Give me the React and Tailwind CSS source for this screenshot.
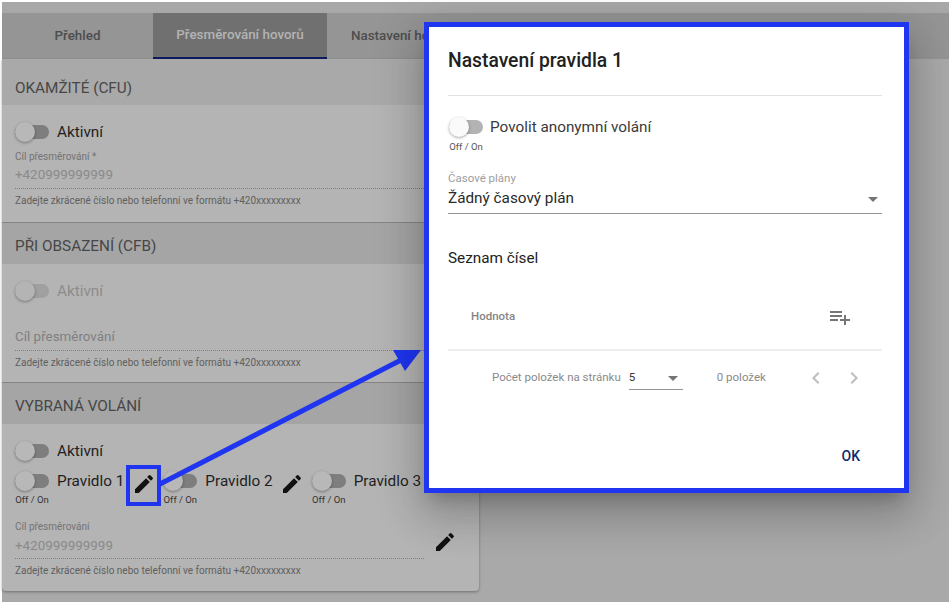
const EDIT = "M3 17.25V21h3.75L17.81 9.94l-3.75-3.75L3 17.25zM20.71 7.04c.39-.39.39-1.02 0-1.41l-2.34-2.34a.9959.9959 0 0 0-1.41 0l-1.83 1.83 3.75 3.75 1.83-1.83z";

function Icon({ d, className }) {
  return (
    <svg viewBox="0 0 24 24" className={className} fill="currentColor" aria-hidden="true">
      <path d={d} />
    </svg>
  );
}

function Pencil({ className = "" }) {
  return <Icon d={EDIT} className={"w-6 h-6 shrink-0 text-[#111111] " + className} />;
}

function Toggle({ track = "bg-[#7e7e7e]", thumb = "bg-[#b8b8b8]" }) {
  return (
    <div className="relative w-[34px] h-[14px] shrink-0">
      <div className={"w-full h-full rounded-full " + track} />
      <div className={"absolute left-0 top-[-3px] w-5 h-5 rounded-full shadow-[0_1px_3px_rgba(0,0,0,0.35)] " + thumb} />
    </div>
  );
}

function Header({ children, className = "" }) {
  return (
    <div className={"flex items-center pl-[13px] text-[15.3px] text-[#474747] bg-[#a5a5a5] " + className}>
      {children}
    </div>
  );
}

function Helper() {
  return (
    <div className="text-[10px] leading-[12px] text-[#5f5f5f] mt-[6px]">
      Zadejte zkrácené číslo nebo telefonní ve formátu +420xxxxxxxxx
    </div>
  );
}

function Dotted() {
  return <div className="mt-[3px] w-[409px] border-b border-dotted border-[#7d7d7d]" />;
}

function Rule({ label }) {
  return (
    <div className="flex flex-col">
      <div className="flex items-center h-[24px]">
        <Toggle />
        <span className="ml-2 text-[15.3px] leading-[24px] text-[#1f1f1f] whitespace-nowrap">{label}</span>
      </div>
      <div className="text-[9.5px] leading-[12px] text-[#333333] mt-[1px] w-[34px] text-center whitespace-nowrap">Off / On</div>
    </div>
  );
}

export default function App() {
  return (
    <div className="relative w-[949px] h-[603px] overflow-hidden bg-white pl-[2px] pt-[2px] pb-[1px] font-['Roboto',sans-serif]">
      <div className="h-full bg-[#a9a9a9]">
        <div className="h-[11px] bg-[#a8a8a8]" />
        <div className="flex h-[46px] bg-[#959595] text-[13.4px] font-medium text-[#4d4d4d]">
          <div className="w-[151px] flex items-center justify-center">Přehled</div>
          <div className="w-[174px] flex items-center justify-center bg-[#707070] text-[#b4b4b4] border-b-2 border-[#0a1a5c]">Přesměrování hovorů</div>
          <div className="w-[174px] flex items-center pl-[24px]">Nastavení hovorů</div>
        </div>

        <div className="w-[477px] rounded-b-[4px] shadow-[0_1px_3px_rgba(0,0,0,0.35)] bg-[#b4b4b4]">
          <Header className="h-[46px] pt-[12px] bg-[#a9a9a9]">OKAMŽITÉ (CFU)</Header>
          <div className="h-[118px] pl-[13px] pt-[15px] border-b border-[#858585]">
            <div className="flex items-center h-[24px]">
              <Toggle />
              <span className="ml-2 text-[15.3px] leading-[24px] text-[#1f1f1f]">Aktivní</span>
            </div>
            <div className="text-[10px] leading-[12px] text-[#737373] mt-[7px]">Cíl přesměrování *</div>
            <div className="text-[13.4px] leading-[20px] text-[#8a8a8a] mt-[2px]">+420999999999</div>
            <Dotted />
            <Helper />
          </div>

          <Header className="h-[41px] pt-[6px]">PŘI OBSAZENÍ (CFB)</Header>
          <div className="h-[119px] pl-[13px] pt-[15px] border-b border-[#858585]">
            <div className="flex items-center h-[24px]">
              <Toggle track="bg-[#a0a0a0]" thumb="bg-[#b4b4b4]" />
              <span className="ml-2 text-[15.3px] leading-[24px] text-[#8c8c8c]">Aktivní</span>
            </div>
            <div className="text-[13.4px] leading-[20px] text-[#808080] mt-[24px]">Cíl přesměrování</div>
            <Dotted />
            <Helper />
          </div>

          <Header className="h-[41px] pt-[6px]">VYBRANÁ VOLÁNÍ</Header>
          <div className="h-[167px] pl-[13px] pt-[15px]">
            <div className="flex items-center h-[24px]">
              <Toggle />
              <span className="ml-2 text-[15.3px] leading-[24px] text-[#1f1f1f]">Aktivní</span>
            </div>
            <div className="flex items-start mt-[6px]">
              <Rule label="Pravidlo 1" />
              <Pencil className="ml-[8px] mt-[3px]" />
              <div className="ml-[7px]"><Rule label="Pravidlo 2" /></div>
              <Pencil className="ml-[7px] mt-[3px]" />
              <div className="ml-[8px]"><Rule label="Pravidlo 3" /></div>
            </div>
            <div className="flex items-center mt-[15px]">
              <div>
                <div className="text-[10px] leading-[12px] text-[#737373]">Cíl přesměrování</div>
                <div className="text-[13.4px] leading-[20px] text-[#8a8a8a] mt-[3px]">+420999999999</div>
                <div className="-mt-[1px]"><Dotted /></div>
                <Helper />
              </div>
              <Pencil className="ml-[9px] mb-[14px]" />
            </div>
          </div>
        </div>
      </div>

      {/* callout drawn over the page: highlight box and arrow */}
      <div className="absolute left-[126px] top-[465px] w-[35px] h-[41px] border-[4px] border-[#1f35f0]" />
      <svg className="absolute left-0 top-0 w-[949px] h-[603px] pointer-events-none" viewBox="0 0 949 603" aria-hidden="true">
        <line x1="160" y1="484" x2="403" y2="359" stroke="#1f35f0" strokeWidth="5" />
        <polygon points="421,350 393,350 405,371" fill="#1f35f0" />
      </svg>

      {/* modal dialog */}
      <div className="absolute left-[424px] top-[22px] w-[485px] h-[471px] border-[5px] border-[#1f35f0] bg-white pl-[19px] pr-[22px] shadow-[0_11px_15px_-7px_rgba(0,0,0,0.2),0_24px_38px_3px_rgba(0,0,0,0.14),0_9px_46px_8px_rgba(0,0,0,0.12)]">
        <div className="h-[69px] flex items-center text-[19.3px] font-medium text-[#212121] border-b border-[#e2e2e2]">Nastavení pravidla 1</div>
        <div className="flex items-center h-[24px] mt-[19px]">
          <div className="ml-[1px]"><Toggle track="bg-[#b3b3b3]" thumb="bg-[#fafafa]" /></div>
          <span className="ml-[7px] text-[15.3px] leading-[24px] text-[#3a3a3a]">Povolit anonymní volání</span>
        </div>
        <div className="mt-[2px] text-[9.5px] leading-[12px] text-[#555555] w-[36px] text-center whitespace-nowrap">Off / On</div>
        <div className="text-[11.5px] leading-[12px] text-[#9e9e9e] mt-[19px]">Časové plány</div>
        <div className="flex items-center justify-between h-[30px] border-b border-[#949494] text-[15.3px] text-[#2a2a2a]">
          <span>Žádný časový plán</span>
          <Icon d="M7 10l5 5 5-5z" className="w-6 h-6 text-[#757575] -mr-[3px]" />
        </div>
        <div className="text-[15.3px] leading-[24px] text-[#212121] mt-[32px]">Seznam čísel</div>
        <div className="flex items-center justify-between h-[81px] pt-[15px] pl-[23px] pr-[30px] border-b-2 border-[#eeeeee] text-[11.5px] font-medium text-[#858585]">
          <span>Hodnota</span>
          <Icon d="M14 10H2v2h12v-2zm0-4H2v2h12V6zm4 8v-4h-2v4h-4v2h4v4h2v-4h4v-2h-4zM2 16h8v-2H2v2z" className="w-6 h-6 text-[#757575]" />
        </div>
        <div className="flex items-center h-[54px] pl-[44px] text-[11.5px] text-[#8a8a8a]">
          <span>Počet položek na stránku</span>
          <div className="ml-[8px] w-[54px] h-[24px] flex items-center justify-between border-b border-[#949494] text-[#333333]">
            <span>5</span>
            <Icon d="M7 10l5 5 5-5z" className="w-6 h-6 text-[#757575] -mr-[2px]" />
          </div>
          <span className="ml-[34px]">0 položek</span>
          <Icon d="M15.41 16.59 10.83 12l4.58-4.59L14 6l-6 6 6 6 1.41-1.41z" className="w-6 h-6 ml-[38px] text-[#bdbdbd]" />
          <Icon d="M8.59 16.59 13.17 12 8.59 7.41 10 6l6 6-6 6-1.41-1.41z" className="w-6 h-6 ml-[14px] text-[#bdbdbd]" />
        </div>
        <div className="flex justify-end mt-[41px] pr-[22px]">
          <span className="text-[14px] font-medium text-[#0d2b6b]">OK</span>
        </div>
      </div>
    </div>
  );
}
